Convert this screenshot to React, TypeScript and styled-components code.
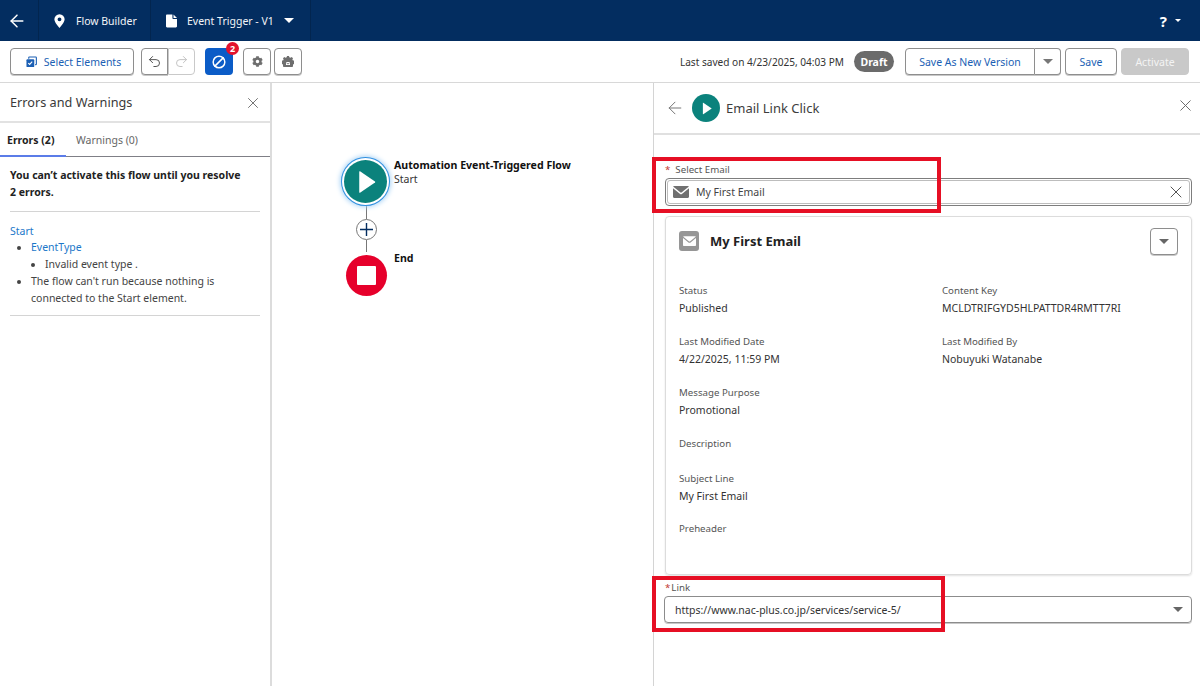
import { FC, ReactNode } from "react";
import styled, { createGlobalStyle } from "styled-components";
import { ArrowLeft, Ban, Redo2, Undo2, X } from "lucide-react";
import { FaCog } from "react-icons/fa";

const GlobalStyle = createGlobalStyle`
  html, body {
    margin: 0;
    padding: 0;
    background: #fff;
    overflow: hidden;
  }
  * { box-sizing: border-box; }
  body {
    font-family: "Noto Sans", "Open Sans", sans-serif;
    font-size: 10.5px;
    color: #2e2e2e;
  }
`;

const Page = styled.div`
  position: relative;
  width: 1200px;
  height: 686px;
  display: flex;
  flex-direction: column;
  overflow: hidden;
`;

/* top navy bar */
const NavBar = styled.header`
  height: 41px;
  background: #032d60;
  color: #fff;
  display: flex;
  align-items: stretch;
  flex: none;
`;

const NavCell = styled.div<{ $width: number }>`
  width: ${(p) => p.$width}px;
  display: flex;
  align-items: center;
  border-right: 1px solid #02254f;
  flex: none;
  font-size: 10.5px;
`;

const NavBack = styled(NavCell)`
  justify-content: center;
  padding-right: 4px;
`;

const NavLabel = styled.span`
  white-space: nowrap;
  color: #f3f5f8;
`;

const NavIconSlot = styled.span<{ $left: number; $right: number }>`
  display: flex;
  margin-left: ${(p) => p.$left}px;
  margin-right: ${(p) => p.$right}px;
`;

const Caret = styled.span<{ $size: number; $color: string }>`
  display: block;
  width: 0;
  height: 0;
  border-left: ${(p) => p.$size}px solid transparent;
  border-right: ${(p) => p.$size}px solid transparent;
  border-top: ${(p) => p.$size}px solid ${(p) => p.$color};
`;

const NavCaret = styled.span`
  margin-left: 10px;
`;

const HelpMenu = styled.div`
  margin-left: auto;
  padding-right: 19px;
  display: flex;
  align-items: center;
  gap: 8px;
  font-size: 15px;
  font-weight: 700;
`;

/* toolbar */
const Toolbar = styled.div`
  height: 42px;
  flex: none;
  display: flex;
  align-items: center;
  padding: 0 11px 0 10px;
  border-bottom: 1px solid #d8d8d8;
  background: #fff;
`;

const OutlineButton = styled.button<{ $width: number }>`
  width: ${(p) => p.$width}px;
  height: 27px;
  flex: none;
  display: flex;
  align-items: center;
  justify-content: center;
  padding: 0;
  background: #fff;
  border: 1px solid #8e8e8e;
  border-radius: 4px;
  box-shadow: 0 1px 0 #c8c8c8;
  color: #1b5fb4;
  font: inherit;
  font-size: 10.5px;
`;

const SelectButton = styled(OutlineButton)`
  gap: 7px;
  padding-left: 3px;
  margin-right: 7px;
`;

const GroupLeft = styled(OutlineButton)`
  border-radius: 4px 0 0 4px;
  color: #555;
`;

const GroupRight = styled(OutlineButton)`
  border-radius: 0 4px 4px 0;
  border-left: 1px solid #d0d0d0;
  border-color: #c9c9c9;
  box-shadow: none;
  color: #c4c4c4;
`;

const ErrorButton = styled.div`
  position: relative;
  width: 28px;
  height: 27px;
  margin: 0 10px;
  border-radius: 4px;
  background: #0b5cc7;
  color: #fff;
  display: flex;
  align-items: center;
  justify-content: center;
`;

const BanIcon = styled(Ban)`
  transform: scaleX(-1);
`;

const Badge = styled.span`
  position: absolute;
  top: -6px;
  right: -6px;
  width: 13px;
  height: 13px;
  border-radius: 50%;
  background: #e3122d;
  color: #fff;
  font-size: 9px;
  font-weight: 700;
  line-height: 13px;
  text-align: center;
`;

const IconButton = styled(OutlineButton)`
  color: #6e6e6e;
  margin-right: 3px;
`;

const SavedText = styled.span`
  margin-left: auto;
  white-space: nowrap;
  color: #333;
  font-size: 10.1px;
`;

const DraftPill = styled.span`
  margin: 0 11px 0 10px;
  width: 40px;
  height: 21px;
  border-radius: 11px;
  background: #6b6b6b;
  color: #fff;
  font-size: 10.5px;
  font-weight: 700;
  display: flex;
  align-items: center;
  justify-content: center;
`;

const SplitMain = styled(OutlineButton)`
  border-radius: 4px 0 0 4px;
`;

const SplitArrow = styled(OutlineButton)`
  border-radius: 0 4px 4px 0;
  border-left: 0;
  margin-right: 4px;
`;

const SaveButton = styled(OutlineButton)`
  margin-right: 4px;
`;

const ActivateButton = styled(OutlineButton)`
  background: #c9c9c9;
  border-color: #c9c9c9;
  box-shadow: none;
  color: #f4f4f4;
`;

/* main area */
const Workspace = styled.main`
  flex: 1;
  display: flex;
  min-height: 0;
`;

const ErrorsPanel = styled.aside`
  width: 272px;
  flex: none;
  border-right: 2px solid #dcdcdc;
  display: flex;
  flex-direction: column;
`;

const PanelHeader = styled.div`
  height: 40px;
  flex: none;
  display: flex;
  align-items: center;
  justify-content: space-between;
  padding: 0 8px 0 10px;
  border-bottom: 2px solid #e2e2e2;
  font-size: 12.7px;
  color: #3a3a3a;

  & svg {
    margin-top: 2px;
  }
`;

const Tabs = styled.div`
  height: 34px;
  flex: none;
  display: flex;
  border-bottom: 1px solid #7f7f86;
`;

const Tab = styled.div<{ $active?: boolean }>`
  width: ${(p) => (p.$active ? 66 : 80)}px;
  padding-left: ${(p) => (p.$active ? 7 : 10)}px;
  display: flex;
  align-items: center;
  font-size: 10.5px;
  font-weight: ${(p) => (p.$active ? 700 : 400)};
  color: ${(p) => (p.$active ? "#222" : "#666")};
  box-shadow: ${(p) => (p.$active ? "inset 0 -2px 0 #5b7ce8" : "none")};
  margin-bottom: -1px;
`;

const ErrorsBody = styled.div`
  padding: 10px 10px 0;
`;

const ErrorSummary = styled.p`
  margin: 0;
  padding: 0 0 10px;
  font-size: 10.5px;
  line-height: 17px;
  font-weight: 700;
  color: #222;
  border-bottom: 1px solid #d4d4d4;
`;

const ErrorList = styled.div`
  padding: 11px 0 8px;
  line-height: 17px;
  font-size: 10.5px;
  color: #444;
  border-bottom: 1px solid #d4d4d4;
`;

const ErrorLink = styled.a`
  color: #1b77c9;
`;

const Bullets = styled.ul`
  margin: -1px 0 0;
  padding-left: 21px;
  list-style: disc;

  & & {
    margin-top: 0;
    padding-left: 14px;
    list-style: disc;
  }
`;

const Canvas = styled.section`
  position: relative;
  width: 381px;
  flex: none;
  background: #fff;
`;

const FlowNode = styled.div<{ $x: number; $y: number; $size: number; $bg: string }>`
  position: absolute;
  left: ${(p) => p.$x}px;
  top: ${(p) => p.$y}px;
  width: ${(p) => p.$size}px;
  height: ${(p) => p.$size}px;
  border-radius: 50%;
  background: ${(p) => p.$bg};
  display: flex;
  align-items: center;
  justify-content: center;
`;

const StartNode = styled(FlowNode)`
  box-shadow: 0 0 0 2px #fff, 0 0 0 3px #2f8fe0, 0 0 5px 4px #a9d3f5;
`;

const StopSquare = styled.span`
  width: 19px;
  height: 19px;
  background: #fff;
  border-radius: 1px;
`;

const Connector = styled.div<{ $y: number; $h: number }>`
  position: absolute;
  left: 94px;
  top: ${(p) => p.$y}px;
  width: 1px;
  height: ${(p) => p.$h}px;
  background: #777;
`;

const AddNode = styled.div`
  position: absolute;
  left: 84px;
  top: 136px;
  width: 21px;
  height: 21px;
  border-radius: 50%;
  border: 1px solid #777;
  background: #fff;
  display: flex;
  align-items: center;
  justify-content: center;
  color: #032d60;
`;

const NodeLabel = styled.div<{ $y: number }>`
  position: absolute;
  left: 122px;
  top: ${(p) => p.$y}px;
  font-size: 10.5px;
  line-height: 14px;
  white-space: nowrap;
  color: #333;

  & b {
    display: block;
    font-size: 10.6px;
    color: #111;
  }
`;

/* right side editor */
const EditorPanel = styled.section`
  flex: 1;
  min-width: 0;
  border-left: 1px solid #d4d4d4;
  display: flex;
  flex-direction: column;
`;

const EditorHeader = styled.div`
  height: 52px;
  flex: none;
  display: flex;
  align-items: center;
  padding: 0 5px 0 11px;
  border-bottom: 2px solid #e0e0e0;
`;

const EditorTitle = styled.span`
  font-size: 13px;
  color: #3d3d3d;
  margin-left: 6px;
`;

const TealDisc = styled.span`
  width: 28px;
  height: 28px;
  margin-left: 7px;
  border-radius: 50%;
  background: #0b827c;
  display: flex;
  align-items: center;
  justify-content: center;
`;

const HeaderClose = styled.span`
  margin-left: auto;
  margin-top: -6px;
  display: flex;
  color: #666;
`;

const EditorBody = styled.div`
  padding: 28px 8px 0 11px;
`;

const FieldLabel = styled.div`
  font-size: 9.7px;
  line-height: 14px;
  color: #555;
  margin-bottom: 1px;
`;

const Required = styled.span<{ $gap: number }>`
  color: #c23934;
  margin-right: ${(p) => p.$gap}px;
`;

const EmailInput = styled.div`
  height: 28px;
  border: 1px solid #7d7d7d;
  border-radius: 4px;
  padding: 1px;
  margin-bottom: 10px;

  & > div {
    height: 100%;
    border: 1px solid #bdbdbd;
    border-radius: 3px;
    display: flex;
    align-items: center;
    padding: 0 3px 0 5px;
    gap: 7px;
    color: #444;
    font-size: 10.5px;
  }
`;

const ClearIcon = styled.span`
  margin-left: auto;
  display: flex;
  color: #555;
`;

const EmailCard = styled.div`
  height: 359px;
  border: 1px solid #dcdcdc;
  border-radius: 4px;
  box-shadow: 0 1px 2px rgba(0, 0, 0, 0.12);
  padding: 10px 13px 0 13px;
  margin-bottom: 6px;
`;

const CardHeader = styled.div`
  height: 28px;
  display: flex;
  align-items: center;
  gap: 11px;
  margin-bottom: 27px;
  font-size: 13px;
  font-weight: 700;
  color: #222;
`;

const CardMenu = styled(OutlineButton)`
  margin-left: auto;
  color: #666;
`;

const MailTile = styled.span`
  width: 20px;
  height: 20px;
  border-radius: 3px;
  background: #969696;
  display: flex;
  align-items: center;
  justify-content: center;
`;

const FieldGrid = styled.div`
  display: grid;
  grid-template-columns: 263px 1fr;
`;

const Field = styled.div<{ $height: number }>`
  height: ${(p) => p.$height}px;
  font-size: 9.7px;
  line-height: 18px;
  color: #555;

  & strong {
    display: block;
    margin-top: -1px;
    font-weight: 400;
    font-size: 10.5px;
    color: #333;
  }
`;

const LinkSelect = styled.div`
  height: 27px;
  margin-left: -1px;
  border: 1px solid #8c8c8c;
  border-radius: 4px;
  box-shadow: 0 1px 0 #c8c8c8;
  display: flex;
  align-items: center;
  justify-content: space-between;
  padding: 0 8px 0 10px;
  font-size: 10.5px;
  color: #333;
`;

const Highlight = styled.div<{ $x: number; $y: number; $w: number; $h: number }>`
  position: absolute;
  left: ${(p) => p.$x}px;
  top: ${(p) => p.$y}px;
  width: ${(p) => p.$w}px;
  height: ${(p) => p.$h}px;
  border: 4px solid #e60f24;
  pointer-events: none;
`;

const PinIcon: FC = () => (
  <svg width="11" height="14" viewBox="0 0 12 15">
    <path
      fill="#fff"
      fillRule="evenodd"
      d="M6 0a5.600 5.600 0 0 0-5.600 5.600C.4 9.400 6 15 6 15s5.600-5.600 5.600-9.400A5.600 5.600 0 0 0 6 0Zm0 3.600a2.100 2.100 0 1 1 0 4.200 2.100 2.100 0 0 1 0-4.200Z"
    />
  </svg>
);

const DocIcon: FC = () => (
  <svg width="11" height="14" viewBox="0 0 12 14">
    <path fill="#fff" d="M1.200 0H7v3.600c0 .6.500 1.100 1.100 1.100H12v8.100c0 .7-.5 1.200-1.200 1.200H1.200C.5 14 0 13.500 0 12.800V1.200C0 .5.500 0 1.200 0Z" />
    <path fill="#fff" d="M8.200 0 12 3.700H8.200Z" />
  </svg>
);

const StackedCheckIcon: FC = () => (
  <svg width="11" height="12" viewBox="0 0 12 12">
    <path fill="none" stroke="#1b5fb4" strokeWidth="1.200" d="M3 2.500V1.200c0-.3.200-.6.600-.6h7c.3 0 .7.300.7.700v6.900c0 .4-.4.700-.7.700H10" />
    <rect x="0.500" y="3" width="8.500" height="8.500" rx="1" fill="#1b5fb4" />
    <path fill="none" stroke="#fff" strokeWidth="1.200" d="m2.500 7.200 1.500 1.500 2.800-3" />
  </svg>
);

const GearDomeIcon: FC = () => (
  <svg width="12" height="11" viewBox="0 0 12 11">
    <path
      fill="#6e6e6e"
      d="M5 0h2l.3 1.200 1.300.5L9.700 1l1.300 1.300-.6 1.100.5 1.100H12V8l-1 .5V10c0 .5-.4 1-1 1H2c-.6 0-1-.5-1-1V8.500L0 8V4.500h1.100l.5-1.100L1 2.300 2.300 1l1.100.7 1.300-.5Z"
    />
    <path fill="#fff" d="M4 6h4v3H4z" />
    <path fill="#6e6e6e" d="m4.300 6.300 1.700 1.300 1.700-1.300v.8L6 8.400 4.300 7.100Z" />
  </svg>
);

const EnvelopeIcon: FC<{ $w: number; $h: number; $color: string }> = ({ $w, $h, $color }) => (
  <svg width={$w} height={$h} viewBox="0 0 16 12">
    <path fill={$color} d="M1 0h14c.5 0 .8.300.6.700L8.500 6.600c-.3.200-.7.200-1 0L.4.700C.2.300.5 0 1 0Z" />
    <path fill={$color} d="M0 2.300v8.500c0 .7.500 1.200 1.200 1.200h13.600c.7 0 1.200-.5 1.200-1.200V2.300L8.900 8c-.5.400-1.300.400-1.800 0Z" />
  </svg>
);

const PlayIcon: FC<{ size: number }> = ({ size }) => (
  <svg width={size} height={size} viewBox="0 0 16 16">
    <path fill="#fff" d="M3.500 1.200v13.600c0 .3.300.4.500.3l10-6.800c.2-.2.200-.4 0-.6L4 .9c-.2-.1-.5 0-.5.300Z" />
  </svg>
);

const ErrorsSection: FC = () => (
  <ErrorsPanel>
    <PanelHeader>
      Errors and Warnings
      <X size={18} strokeWidth={1.2} color="#666" />
    </PanelHeader>
    <Tabs>
      <Tab $active>Errors (2)</Tab>
      <Tab>Warnings (0)</Tab>
    </Tabs>
    <ErrorsBody>
      <ErrorSummary>
        You can’t activate this flow until you resolve
        <br />2 errors.
      </ErrorSummary>
      <ErrorList>
        <ErrorLink>Start</ErrorLink>
        <Bullets>
          <li>
            <ErrorLink>EventType</ErrorLink>
            <Bullets>
              <li>Invalid event type .</li>
            </Bullets>
          </li>
          <li>The flow can't run because nothing is connected to the Start element.</li>
        </Bullets>
      </ErrorList>
    </ErrorsBody>
  </ErrorsPanel>
);

const FlowCanvas: FC = () => (
  <Canvas>
    <Connector $y={120} $h={16} />
    <Connector $y={157} $h={12} />
    <StartNode $x={72} $y={77} $size={43} $bg="#0b827c">
      <PlayIcon size={24} />
    </StartNode>
    <AddNode>
      <svg width="13" height="13" viewBox="0 0 13 13">
        <path stroke="currentColor" strokeWidth="1.400" d="M6.500 0v13M0 6.500h13" />
      </svg>
    </AddNode>
    <FlowNode $x={74} $y={172} $size={41} $bg="#e6002b">
      <StopSquare />
    </FlowNode>
    <NodeLabel $y={75}>
      <b>Automation Event-Triggered Flow</b>
      Start
    </NodeLabel>
    <NodeLabel $y={168}>
      <b>End</b>
    </NodeLabel>
  </Canvas>
);

const leftFields: { label: string; value?: string; height: number }[] = [
  { label: "Status", value: "Published", height: 51 },
  { label: "Last Modified Date", value: "4/22/2025, 11:59 PM", height: 51 },
  { label: "Message Purpose", value: "Promotional", height: 51 },
  { label: "Description", height: 35 },
  { label: "Subject Line", value: "My First Email", height: 50 },
  { label: "Preheader", height: 20 },
];

const rightFields: { label: string; value: string }[] = [
  { label: "Content Key", value: "MCLDTRIFGYD5HLPATTDR4RMTT7RI" },
  { label: "Last Modified By", value: "Nobuyuki Watanabe" },
];

const Editor: FC = () => (
  <EditorPanel>
    <EditorHeader>
      <ArrowLeft size={20} strokeWidth={1.2} color="#777" />
      <TealDisc>
        <PlayIcon size={13} />
      </TealDisc>
      <EditorTitle>Email Link Click</EditorTitle>
      <HeaderClose>
        <X size={19} strokeWidth={1.2} />
      </HeaderClose>
    </EditorHeader>
    <EditorBody>
      <FieldLabel>
        <Required $gap={5}>*</Required>Select Email
      </FieldLabel>
      <EmailInput>
        <div>
          <EnvelopeIcon $w={16} $h={12} $color="#707070" />
          My First Email
          <ClearIcon>
            <X size={20} strokeWidth={1.2} />
          </ClearIcon>
        </div>
      </EmailInput>
      <EmailCard>
        <CardHeader>
          <MailTile>
            <EnvelopeIcon $w={13} $h={10} $color="#fff" />
          </MailTile>
          My First Email
          <CardMenu $width={28}>
            <Caret $size={5} $color="#666" />
          </CardMenu>
        </CardHeader>
        <FieldGrid>
          <div>
            {leftFields.map((field) => (
              <Field key={field.label} $height={field.height}>
                {field.label}
                {field.value && <strong>{field.value}</strong>}
              </Field>
            ))}
          </div>
          <div>
            {rightFields.map((field) => (
              <Field key={field.label} $height={51}>
                {field.label}
                <strong>{field.value}</strong>
              </Field>
            ))}
          </div>
        </FieldGrid>
      </EmailCard>
      <FieldLabel>
        <Required $gap={1}>*</Required>Link
      </FieldLabel>
      <LinkSelect>
        https://www.nac-plus.co.jp/services/service-5/
        <Caret $size={5} $color="#666" />
      </LinkSelect>
    </EditorBody>
  </EditorPanel>
);

const ToolIcon: FC<{ children: ReactNode }> = ({ children }) => <IconButton $width={28}>{children}</IconButton>;

export default function App() {
  return (
    <Page>
      <GlobalStyle />
      <NavBar>
        <NavBack $width={39}>
          <ArrowLeft size={20} strokeWidth={1.8} />
        </NavBack>
        <NavCell $width={112}>
          <NavIconSlot $left={15} $right={11}>
            <PinIcon />
          </NavIconSlot>
          <NavLabel>Flow Builder</NavLabel>
        </NavCell>
        <NavCell $width={160}>
          <NavIconSlot $left={15} $right={10}>
            <DocIcon />
          </NavIconSlot>
          <NavLabel>Event Trigger - V1</NavLabel>
          <NavCaret>
            <Caret $size={5} $color="#fff" />
          </NavCaret>
        </NavCell>
        <HelpMenu>
          ?
          <Caret $size={3} $color="#fff" />
        </HelpMenu>
      </NavBar>
      <Toolbar>
        <SelectButton $width={124}>
          <StackedCheckIcon />
          Select Elements
        </SelectButton>
        <GroupLeft $width={27}>
          <Undo2 size={15} strokeWidth={1.6} />
        </GroupLeft>
        <GroupRight $width={27}>
          <Redo2 size={15} strokeWidth={1.6} />
        </GroupRight>
        <ErrorButton>
          <BanIcon size={14} strokeWidth={2.5} />
          <Badge>2</Badge>
        </ErrorButton>
        <ToolIcon>
          <FaCog size={11} />
        </ToolIcon>
        <ToolIcon>
          <GearDomeIcon />
        </ToolIcon>
        <SavedText>Last saved on 4/23/2025, 04:03 PM</SavedText>
        <DraftPill>Draft</DraftPill>
        <SplitMain $width={130}>Save As New Version</SplitMain>
        <SplitArrow $width={26}>
          <Caret $size={5} $color="#777" />
        </SplitArrow>
        <SaveButton $width={52}>Save</SaveButton>
        <ActivateButton $width={68}>Activate</ActivateButton>
      </Toolbar>
      <Workspace>
        <ErrorsSection />
        <FlowCanvas />
        <Editor />
      </Workspace>
      <Highlight $x={652} $y={157} $w={289} $h={56} />
      <Highlight $x={652} $y={576} $w={293} $h={56} />
    </Page>
  );
}
